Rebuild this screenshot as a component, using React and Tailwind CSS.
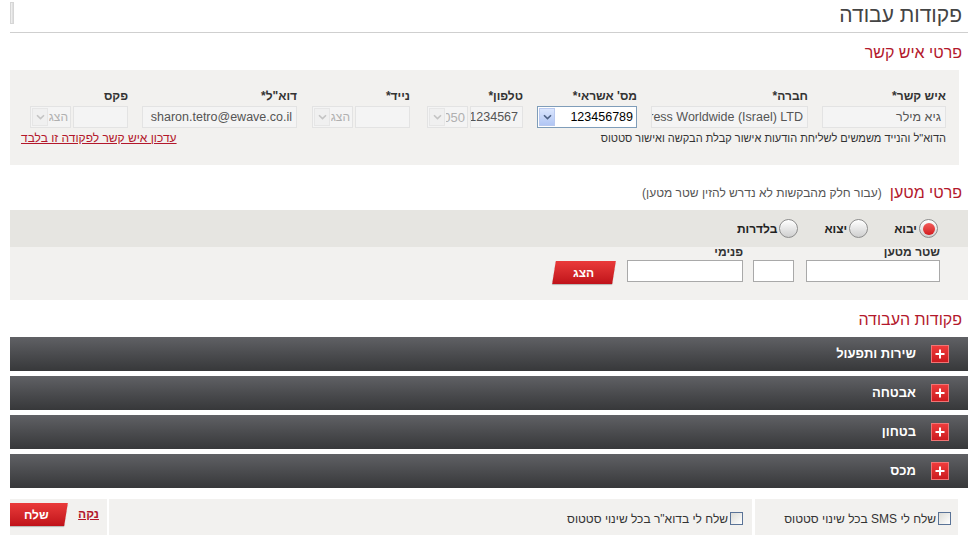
import React from "react";

const Chevron = ({ className }) => (
  <svg width="9" height="6" viewBox="0 0 9 6" className={className}>
    <path d="M1 1.2 L4.5 4.6 L8 1.2" fill="none" stroke="currentColor" strokeWidth="1.6" />
  </svg>
);

function DisabledSelect({ className, text, textClass = "text-[12px]" }) {
  return (
    <div className={"flex h-[22px] items-center border border-[#e3e3e3] bg-[#f4f4f4] " + className}>
      <div className="flex h-full min-w-0 flex-1 items-center overflow-hidden pr-[2px]">
        <span className={"shrink-0 whitespace-nowrap leading-none text-[#b0b0b0] " + textClass}>{text}</span>
      </div>
      <span className="mx-[1px] flex h-[18px] w-[16px] shrink-0 items-center justify-center border border-[#e6e6e6] bg-[#f0f0f0] text-[#c4c4c4]">
        <Chevron />
      </span>
    </div>
  );
}

function Field({ label, children, className = "" }) {
  return (
    <div className={"flex flex-col " + className}>
      <div className="h-[16px] text-[12px] font-bold leading-[16px] text-[#333]">{label}</div>
      <div className="mt-[2px] flex gap-[2px]">{children}</div>
    </div>
  );
}

function GrayInput({ className, value }) {
  return (
    <div className={"flex h-[22px] items-center overflow-hidden border border-[#e3e3e3] bg-[#f4f4f4] px-[4px] text-[12.5px] leading-none text-[#555] " + className}>
      <span className="shrink-0 whitespace-nowrap">{value}</span>
    </div>
  );
}

function Radio({ label, checked }) {
  return (
    <div className="flex items-center gap-[2px]">
      <span className="flex h-[19px] w-[19px] items-center justify-center rounded-full border border-[#8c8c8c] bg-gradient-to-b from-[#ffffff] to-[#cfcfcf] shadow-[inset_0_1px_1px_rgba(255,255,255,0.9)]">
        {checked && (
          <span className="h-[12px] w-[12px] rounded-full bg-gradient-to-b from-[#f25a5a] to-[#d3151c]" />
        )}
      </span>
      <span className="text-[12px] font-bold text-[#222]">{label}</span>
    </div>
  );
}

function Bar({ label }) {
  return (
    <div className="mb-[5px] flex h-[34px] items-center bg-gradient-to-b from-[#606165] to-[#37383a] pr-[19px]">
      <span className="flex h-[18px] w-[18px] items-center justify-center border border-[#f07474] bg-gradient-to-b from-[#ee3b3b] to-[#cc1a1f]">
        <svg width="10" height="10" viewBox="0 0 10 10">
          <path d="M5 0.5 V9.5 M0.5 5 H9.5" stroke="#fff" strokeWidth="2" />
        </svg>
      </span>
      <span className="mr-[15px] text-[13px] font-bold leading-[18px] text-white">{label}</span>
    </div>
  );
}

function Checkbox() {
  return (
    <span className="h-[13px] w-[13px] border border-[#5a7397] bg-gradient-to-br from-[#dcdcd7] to-[#ffffff]" />
  );
}

function RedButton({ label, className = "" }) {
  return (
    <div className={"flex h-[23px] -skew-x-[9deg] items-center justify-center bg-gradient-to-b from-[#ea3a3a] to-[#c01119] shadow-[0_1px_1px_rgba(0,0,0,0.25)] " + className}>
      <span className="skew-x-[9deg] text-[12px] font-bold text-white">{label}</span>
    </div>
  );
}

export default function App() {
  return (
    <div
      dir="rtl"
      className="h-[548px] w-[968px] overflow-hidden bg-white font-['Liberation_Sans','Arimo','DejaVu_Sans',sans-serif] text-[#333]"
    >
      <div className="ml-[10px]">
        {/* header */}
        <div className="flex h-[33px] justify-between border-b border-[#cfcfcf]">
          <h1 className="pr-[6px] pt-[1px] text-[21px] font-normal leading-[28px] text-[#444]">פקודות עבודה</h1>
          <div className="mt-[2px] h-[22px] w-[4px] border border-[#d6d6d6] bg-gradient-to-r from-[#f4f4f4] to-[#dadada]" />
        </div>

        {/* contact section */}
        <div className="flex h-[37px] items-center pr-[6px] pt-[3px]">
          <h2 className="text-[16px] font-normal text-[#b3182c]">פרטי איש קשר</h2>
        </div>
        <div className="mr-[9px] bg-[#f2f1ef] pb-[20px] pl-[11px] pr-[13px] pt-[18px]">
          <div className="flex">
            <Field label="איש קשר*" className="ml-[14px]">
              <GrayInput className="w-[124px]" value="גיא מילר" />
            </Field>
            <Field label="חברה*" className="ml-[14px]">
              <GrayInput className="w-[157px]" value="DHL Express Worldwide (Israel) LTD" />
            </Field>
            <Field label="מס' אשראי*" className="ml-[14px]">
              <div className="flex h-[22px] w-[100px] items-center border border-[#7f9db9] bg-white">
                <span className="flex-1 pr-[3px] text-[12.5px] leading-none text-black">123456789</span>
                <span className="m-[1px] flex h-[18px] w-[16px] items-center justify-center border border-[#b9c9ef] bg-gradient-to-b from-[#dbe6fd] to-[#b1c6f4] text-[#4d6185]">
                  <Chevron />
                </span>
              </div>
            </Field>
            <Field label="טלפון*" className="ml-[17px]">
              <GrayInput className="w-[53px]" value="1234567" />
              <DisabledSelect className="w-[41px]" text="050" textClass="text-[13px]" />
            </Field>
            <Field label="נייד*" className="ml-[15px]">
              <GrayInput className="w-[55px]" value="" />
              <DisabledSelect className="w-[41px]" text="הצג" />
            </Field>
            <Field label={'דוא"ל*'} className="ml-[14px]">
              <GrayInput className="w-[155px]" value="sharon.tetro@ewave.co.il" />
            </Field>
            <Field label="פקס">
              <GrayInput className="w-[55px]" value="" />
              <DisabledSelect className="w-[41px]" text="הצג" />
            </Field>
          </div>
          <div className="mt-[3px] flex h-[14px] items-center justify-between">
            <span className="text-[11px] text-[#333]">הדוא"ל והנייד משמשים לשליחת הודעות אישור קבלת הבקשה ואישור סטטוס</span>
            <a className="text-[12px] text-[#b3172b] underline">עדכון איש קשר לפקודה זו בלבד</a>
          </div>
        </div>

        {/* cargo section */}
        <div className="flex h-[45px] items-center gap-[8px] pr-[6px] pt-[11px]">
          <h2 className="text-[16px] font-normal text-[#b3182c]">פרטי מטען</h2>
          <span className="text-[12px] text-[#555]">(עבור חלק מהבקשות לא נדרש להזין שטר מטען)</span>
        </div>
        <div className="flex h-[37px] items-center gap-[26px] bg-[#e6e5e1] pr-[30px]">
          <Radio label="יבוא" checked />
          <Radio label="יצוא" />
          <Radio label="בלדרות" />
        </div>
        <div className="flex h-[53px] items-start bg-[#f2f1ef] pr-[28px]">
          <div className="ml-[12px] flex flex-col">
            <div className="h-[13px] text-[12px] font-bold leading-[11px] text-[#333]">שטר מטען</div>
            <div className="h-[22px] w-[134px] border border-[#a9a9a9] bg-white" />
          </div>
          <div className="ml-[10px] mt-[13px] h-[22px] w-[41px] border border-[#a9a9a9] bg-white" />
          <div className="ml-[13px] flex flex-col">
            <div className="h-[13px] text-[12px] font-bold leading-[11px] text-[#333]">פנימי</div>
            <div className="h-[22px] w-[116px] border border-[#a9a9a9] bg-white" />
          </div>
          <RedButton label="הצג" className="mt-[14px] w-[60px]" />
        </div>

        {/* work orders */}
        <div className="flex h-[37px] items-center pr-[6px] pt-[3px]">
          <h2 className="text-[16px] font-normal text-[#b3182c]">פקודות העבודה</h2>
        </div>
        <Bar label="שירות ותפעול" />
        <Bar label="אבטחה" />
        <Bar label="בטחון" />
        <Bar label="מכס" />

        {/* bottom */}
        <div className="mr-[10px] mt-[11px] flex h-[36px] bg-[#f2f1ef]">
          <div className="flex w-[203px] items-start gap-[2px] pr-[7px] pt-[13px]">
            <Checkbox />
            <span className="text-[12px] leading-[14px] text-[#333]">שלח לי SMS בכל שינוי סטטוס</span>
          </div>
          <div className="w-[3px] bg-white" />
          <div className="flex w-[643px] items-start gap-[2px] pr-[9px] pt-[13px]">
            <Checkbox />
            <span className="text-[12px] leading-[14px] text-[#333]">שלח לי בדוא"ר בכל שינוי סטטוס</span>
          </div>
          <div className="w-[2px] bg-white" />
          <div className="flex w-[97px] items-start justify-between overflow-hidden pr-[8px] pt-[4px]">
            <a className="mt-[2px] text-[12px] font-bold text-[#b3172b] underline">נקה</a>
            <RedButton label="שלח" className="-ml-[4px] w-[60px]" />
          </div>
        </div>
      </div>
    </div>
  );
}
